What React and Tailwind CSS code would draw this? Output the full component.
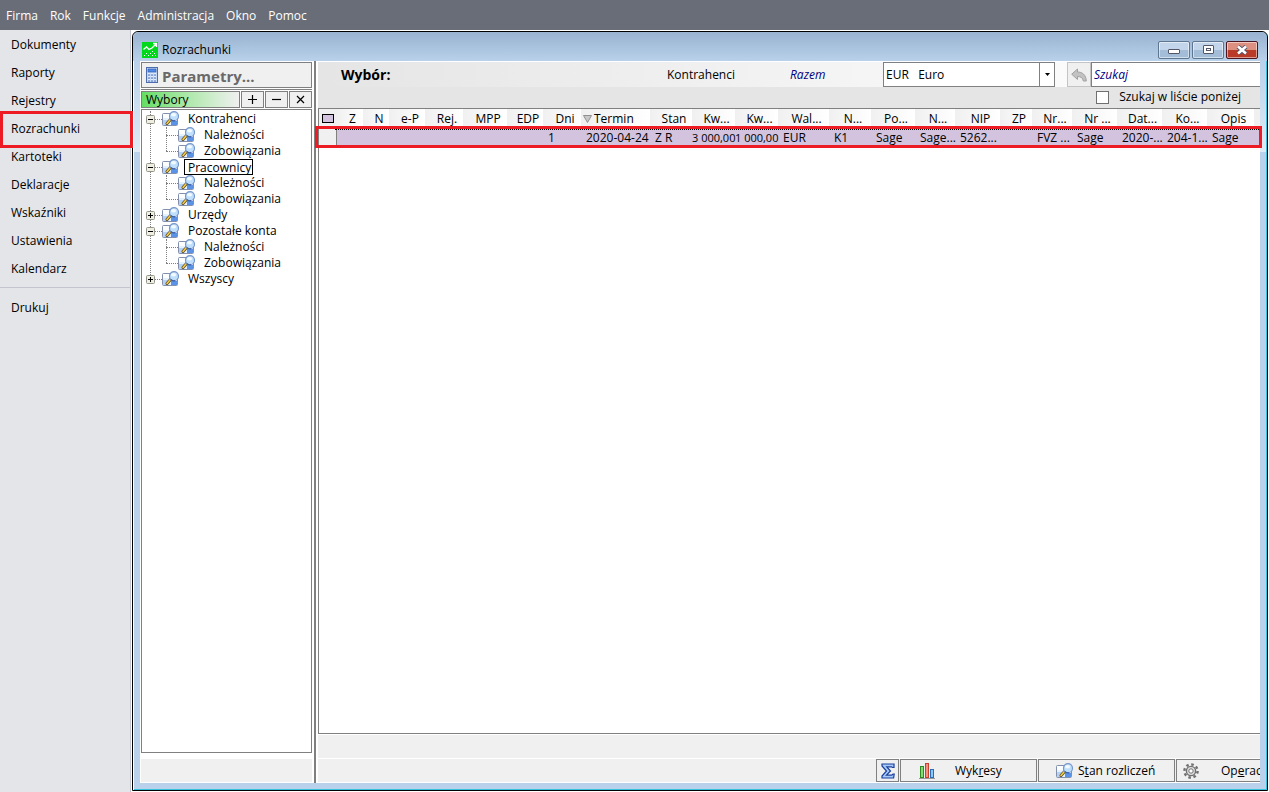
import React from "react";

const menu = ["Firma", "Rok", "Funkcje", "Administracja", "Okno", "Pomoc"];
const nav = ["Dokumenty", "Raporty", "Rejestry", "Rozrachunki", "Kartoteki", "Deklaracje", "Wskaźniki", "Ustawienia", "Kalendarz"];

const tree = [
  { label: "Kontrahenci", open: true, children: ["Należności", "Zobowiązania"] },
  { label: "Pracownicy", open: true, focused: true, children: ["Należności", "Zobowiązania"] },
  { label: "Urzędy", open: false, children: [] },
  { label: "Pozostałe konta", open: true, children: ["Należności", "Zobowiązania"] },
  { label: "Wszyscy", open: false, children: [] },
];

const columns = [
  { h: "Z", w: "w-[27px]", v: "" },
  { h: "N", w: "w-[26px]", v: "" },
  { h: "e-P", w: "w-[36px]", v: "" },
  { h: "Rej.", w: "w-[38px]", v: "" },
  { h: "MPP", w: "w-[44px]", v: "" },
  { h: "EDP", w: "w-[36px]", v: "" },
  { h: "Dni", w: "w-[38px]", v: "1" },
  { h: "Termin", w: "w-[69px]", v: "2020-04-24", sorted: true },
  { h: "Stan", w: "w-[42px]", v: "Z R" },
  { h: "Kw...", w: "w-[43px]", v: "3 000,00", amount: true },
  { h: "Kw...", w: "w-[43px]", v: "1 000,00", amount: true },
  { h: "Wal...", w: "w-[51px]", v: "EUR" },
  { h: "N...", w: "w-[42px]", v: "K1" },
  { h: "Po...", w: "w-[44px]", v: "Sage" },
  { h: "N...", w: "w-[40px]", v: "Sage..." },
  { h: "NIP", w: "w-[45px]", v: "5262..." },
  { h: "ZP", w: "w-[32px]", v: "" },
  { h: "Nr...", w: "w-[40px]", v: "FVZ ..." },
  { h: "Nr ...", w: "w-[45px]", v: "Sage" },
  { h: "Dat...", w: "w-[45px]", v: "2020-..." },
  { h: "Ko...", w: "w-[45px]", v: "204-1..." },
  { h: "Opis", w: "w-[47px]", v: "Sage" },
];

function LensIcon({ className = "" }) {
  return (
    <svg viewBox="0 0 18 16" className={"h-4 w-[18px] shrink-0 " + className} aria-hidden="true">
      <rect x="0.5" y="2.5" width="15" height="12" rx="1" fill="#e6f1fd" stroke="#8290ac" />
      <path d="M1 9h5v5H1z" fill="#b5d2f6" />
      <path d="M9 10h6v4H9z" fill="#5a93e6" />
      <path d="M1 3h6v4H1z" fill="#fbfdff" />
      <path d="M8.800 8.200 5 12.600" stroke="#5b4a28" strokeWidth="3" strokeLinecap="round" />
      <path d="M8.600 8.200 5 12.400" stroke="#f5cd3c" strokeWidth="1.600" strokeLinecap="round" />
      <circle cx="12" cy="5.200" r="4.500" fill="#bfe0fb" stroke="#7796cc" strokeWidth="1.200" />
      <path d="M8.600 8.500A4.500 4.500 0 0 0 13 9.600" stroke="#3d5fa8" strokeWidth="1.200" fill="none" />
      <ellipse cx="11.500" cy="3.800" rx="2.600" ry="1.800" fill="#f3faff" />
    </svg>
  );
}

function ChartLogo() {
  return (
    <svg viewBox="0 0 16 16" className="size-4" aria-hidden="true">
      <rect width="16" height="16" fill="#00d81c" />
      <path d="M1.500 7.500 4.500 5 7 7.500 10 6 14 2M11 1.500H14.500V5" fill="none" stroke="#fff" strokeWidth="1.300" />
      <path d="M2 13.500h1M4 11.500h1M6 13.500h1M8 11.500h1M10 13.500h1M10 9.500h1M12 11.500h1M13 13.500h1" stroke="#fff" />
    </svg>
  );
}

function CalcIcon() {
  return (
    <svg viewBox="0 0 12 16" className="h-4 w-3 shrink-0" aria-hidden="true">
      <rect x="0.5" y="0.5" width="11" height="15" fill="#c5d8f6" stroke="#4c6cab" />
      <rect x="2" y="2" width="8" height="3" fill="#4f8be6" stroke="#2a52a8" strokeWidth="0.6" />
      <path d="M2 7.500h8M2 10.500h8M2 13.500h8" stroke="#fff" strokeWidth="2" strokeDasharray="2 1" />
      <path d="M2 8h8M2 11h8M2 14h8" stroke="#2f5cb4" strokeDasharray="2 1" />
    </svg>
  );
}

function BarsIcon() {
  return (
    <svg viewBox="0 0 16 16" className="size-4 shrink-0" aria-hidden="true">
      <rect x="1.5" y="3.5" width="3" height="11" fill="#86dc74" stroke="#2f8a24" />
      <rect x="6.5" y="0.5" width="3" height="14" fill="#f58f7e" stroke="#c8402e" />
      <rect x="11.5" y="6.5" width="3" height="8" fill="#8cc8f8" stroke="#2a6cb8" />
      <path d="M0 15.500h16" stroke="#999" />
    </svg>
  );
}

function SigmaIcon() {
  return (
    <svg viewBox="0 0 14 16" className="h-4 w-3.5 shrink-0" aria-hidden="true">
      <path d="M1 1H13V4.500H11.500L10.500 3.800H5.800L9.500 8 5.500 12.200H10.800L12 11H13.200L12.600 15H1V13L5.500 8 1 3Z" fill="#a4cbf8" stroke="#1c3c9c" strokeWidth="1.200" />
    </svg>
  );
}

function GearIcon() {
  return (
    <svg viewBox="0 0 16 16" className="size-4 shrink-0" aria-hidden="true">
      <circle cx="8" cy="8" r="6.600" fill="none" stroke="#707070" strokeWidth="2.400" strokeDasharray="2.600 2.584" />
      <circle cx="8" cy="8" r="4.600" fill="#dedede" stroke="#707070" strokeWidth="1.400" />
      <circle cx="8" cy="8" r="2.200" fill="#fff" stroke="#707070" />
    </svg>
  );
}

function BackIcon() {
  return (
    <svg viewBox="0 0 16 14" className="h-3.5 w-4 shrink-0" aria-hidden="true">
      <path d="M6.500 1v3C11 4 15 6.500 15.300 13h-3C12 10 10 8.500 6.500 8.500V11.500L0.700 6.200Z" fill="#c2c2c2" stroke="#a0a0a0" />
    </svg>
  );
}

function Expander({ open }) {
  return (
    <button aria-label={open ? "Zwiń" : "Rozwiń"} className="relative z-10 flex size-[9px] shrink-0">
      <svg viewBox="0 0 9 9" className="size-[9px]" aria-hidden="true">
        <rect x="0.5" y="0.5" width="8" height="8" rx="1" fill="#efeee2" stroke="#95958a" />
        <path d={open ? "M2 4.500h5" : "M2 4.500h5M4.500 2v5"} stroke="#000" />
      </svg>
    </button>
  );
}

function Tree() {
  return (
    <ul className="relative">
      <li aria-hidden="true" className="absolute top-0 left-2 h-[168px] border-l border-dotted border-[#808080]" />
      {tree.map((n) => (
        <li key={n.label}>
          <div className="flex h-4 items-center pl-1">
            <Expander open={n.open} />
            <span className="w-[7px] border-t border-dotted border-[#808080]" />
            <LensIcon />
            <span className={n.focused ? "relative z-10 ml-1 h-4 border border-black pr-px pl-[3px] leading-4" : "ml-2 leading-4"}>{n.label}</span>
          </div>
          {n.children.length > 0 && (
            <ul className="relative">
              <li aria-hidden="true" className="absolute top-0 left-6 h-6 border-l border-dotted border-[#808080]" />
              {n.children.map((c) => (
                <li key={c} className="flex h-4 items-center pl-6">
                  <span className="w-3 border-t border-dotted border-[#808080]" />
                  <LensIcon />
                  <span className="ml-2 leading-4">{c}</span>
                </li>
              ))}
            </ul>
          )}
        </li>
      ))}
    </ul>
  );
}

const caption = "flex h-[18px] w-8 items-center justify-center rounded-[2px] border shadow-[inset_0_0_0_1px_rgba(255,255,255,0.5)]";
const captionBlue = " border-[#5f7690] bg-linear-to-b from-[#c3d5ea] from-50% to-[#a3bcd8] to-50%";
const toolButton = "flex shrink-0 items-center border border-[#808080] bg-[#f0f0f0]";

export default function App() {
  return (
    <div className="flex h-screen flex-col overflow-hidden bg-white font-['Open_Sans','Noto_Sans',sans-serif] text-[12px] leading-4 text-black">
      <nav className="flex h-[30px] shrink-0 items-center gap-3 bg-[#696d77] px-1.5 pt-0.5 text-white">
        {menu.map((m) => (
          <button key={m}>{m}</button>
        ))}
      </nav>
      <div className="flex min-h-0 flex-1">
        <aside className="w-[131px] shrink-0 border-r border-[#c3c4cd] bg-[#e4e5e9] pt-px">
          {nav.map((n) => (
            <a key={n} href="#" className="relative flex h-7 items-center pl-[11px]">
              {n}
              {n === "Rozrachunki" && <span className="absolute -top-1 -right-[3px] -bottom-[5px] left-0 z-20 border-3 border-[#ed1c24]" />}
            </a>
          ))}
          <hr className="mt-1 mb-1.5 border-[#c3c4cd]" />
          <a href="#" className="flex h-7 items-center pl-[11px]">Drukuj</a>
        </aside>

        <main className="m-px flex min-w-0 flex-1 flex-col rounded-t-md border border-black bg-[linear-gradient(to_bottom,#b9d1ea_30px,#e0ebf6_120px,#b9d1ea_120px)] shadow-[inset_1px_0_0_#fff,inset_-1px_-1px_0_#35c3e0]">
          <header className="flex h-[29px] shrink-0 items-center justify-between rounded-t-md bg-linear-to-b from-[#98b2d0] to-[#b9d1ea] pt-1.5 pr-[9px] pl-[9px]">
            <div className="flex items-center gap-1">
              <ChartLogo />
              <h1>Rozrachunki</h1>
            </div>
            <div className="flex gap-0.5">
              <button aria-label="Minimalizuj" className={caption + captionBlue}>
                <span className="mt-1 h-[5px] w-3 rounded-[1px] border border-[#535666] bg-white" />
              </button>
              <button aria-label="Maksymalizuj" className={caption + captionBlue}>
                <span className="flex h-[9px] w-[11px] items-center justify-center rounded-[1px] border border-[#535666] bg-white">
                  <span className="h-[3px] w-[5px] border border-[#535666]" />
                </span>
              </button>
              <button aria-label="Zamknij" className={caption + " border-[#4a1420] bg-linear-to-b from-[#dd9080] from-50% to-[#b93a26] to-50%"}>
                <svg viewBox="0 0 12 10" className="h-2.5 w-3" aria-hidden="true">
                  <path d="M2 1.500 10 8.500M10 1.500 2 8.500" stroke="#535666" strokeWidth="4.400" />
                  <path d="M2 1.500 10 8.500M10 1.500 2 8.500" stroke="#fff" strokeWidth="2.600" />
                </svg>
              </button>
            </div>
          </header>

          <div className="mx-[7px] mb-[7px] flex min-h-0 flex-1 bg-white pt-px">
            <section className="flex w-[174px] shrink-0 flex-col pr-0.5 pl-px">
              <button className="flex h-[26px] shrink-0 items-center gap-1 border border-[#808080] bg-[#f0f0f0] pl-1 text-[15px] font-bold text-[#696969]">
                <CalcIcon />
                <span className="pt-0.5">Parametry...</span>
              </button>
              <div className="mt-px flex h-[19px] shrink-0 gap-px border-t border-[#808080] pt-px">
                <h2 className="flex-1 border border-[#808080] bg-linear-to-r from-[#63de63] to-[#f0f0f0] pl-1 leading-[15px]">Wybory</h2>
                {[["Dodaj", "M1 5.500h9M5.500 1v9"], ["Usuń", "M1 5.500h9"], ["Wyczyść", "M2 2l7 7M9 2l-7 7"]].map(([label, d]) => (
                  <button key={label} aria-label={label} className={toolButton + " w-[23px] justify-center"}>
                    <svg viewBox="0 0 11 11" className="size-[11px]" aria-hidden="true">
                      <path d={d} stroke="#000" strokeWidth="1.200" />
                    </svg>
                  </button>
                ))}
              </div>
              <div className="mt-px min-h-0 flex-1 overflow-hidden border border-[#808080] pt-px">
                <Tree />
              </div>
              <div className="mt-1.5 mb-px h-[23px] shrink-0 bg-[#f0f0f0]" />
            </section>
            <div className="-mt-px w-0.5 shrink-0 bg-[#808080]" />

            <section className="ml-0.5 flex min-w-0 flex-1 flex-col">
              <div className="h-[46px] shrink-0 bg-[#e5e5e5]">
                <div className="flex h-[25px] bg-linear-to-r from-[#e5e5e5] to-white to-95%">
                  <h2 className="w-[349px] shrink-0 pt-[5px] pl-[23px] text-[14px] font-bold">Wybór:</h2>
                  <span className="w-[123px] shrink-0 pt-[5px]">Kontrahenci</span>
                  <em className="flex-1 pt-[5px] text-[#000080]">Razem</em>
                  <div className="relative w-[172px] shrink-0">
                    <select aria-label="Waluta" className="size-full appearance-none border border-[#808080] bg-white pl-0.5 outline-none">
                      <option>{"EUR\u00a0\u00a0\u00a0Euro"}</option>
                    </select>
                    <span className="pointer-events-none absolute inset-y-0 right-0 flex w-4 items-center justify-center border border-[#808080]">
                      <svg viewBox="0 0 5 3" className="h-[3px] w-[5px]" aria-hidden="true"><path d="M0 0h5L2.500 3z" /></svg>
                    </span>
                  </div>
                  <button aria-label="Cofnij" className="ml-3 flex w-6 shrink-0 items-center justify-center border border-[#c4c4c4] bg-[#f0f0f0]">
                    <BackIcon />
                  </button>
                  <input aria-label="Szukaj" placeholder="Szukaj" className="w-[169px] shrink-0 border border-r-0 border-[#808080] bg-white pl-0.5 italic outline-none placeholder:text-[#000080]" />
                </div>
                <label className="flex items-center justify-end gap-2.5 pt-0.5 pr-[19px]">
                  <input type="checkbox" className="size-[13px] appearance-none border border-[#707070] bg-white" />
                  Szukaj w liście poniżej
                </label>
              </div>

              <div className="relative min-h-0 flex-1 border-t border-b border-l border-[#808080]">
                <table className="w-full table-fixed border-collapse">
                  <thead>
                    <tr className="h-[18px]">
                      <th className="w-[17px] bg-[#f0f0f0] p-0 pt-px">
                        <span className="mx-auto block h-[9px] w-3 border border-black bg-[#d3c3de]" />
                      </th>
                      {columns.map((c, i) => (
                        <th key={i} className={c.w + " bg-linear-to-r from-[#f0f0f0] to-white p-0 pt-0.5 pl-1.5 font-normal whitespace-nowrap"}>
                          {c.sorted ? (
                            <span className="-ml-1 flex items-center gap-0.5">
                              <svg viewBox="0 0 9 8" className="h-2 w-[9px]" aria-hidden="true">
                                <path d="M0.500 0.500h8L4.500 7.500z" fill="#c8c8c8" stroke="#909090" />
                              </svg>
                              {c.h}
                            </span>
                          ) : c.h}
                        </th>
                      ))}
                      <th className="bg-[#f0f0f0] p-0" aria-label="Koniec" />
                    </tr>
                  </thead>
                  <tbody>
                    <tr className="h-5 bg-[#d3c3de]">
                      <td className="border-r border-[#808080] bg-[#f0f0f0] p-0" />
                      {columns.map((c, i) => (
                        <td key={i} className={"p-0 pt-0.5 whitespace-nowrap " + (c.amount ? "text-right text-[11px]" : "pl-[5px]")}>{c.v}</td>
                      ))}
                      <td className="p-0" />
                    </tr>
                  </tbody>
                </table>
                <div className="absolute top-[17px] -right-0.5 -left-1 h-[22px] border-3 border-[#ed1c24]">
                  <div className="ml-[17px] border-t border-dotted border-black" />
                </div>
              </div>

              <div className="mt-px h-[23px] shrink-0 bg-[#f0f0f0]" />
              <footer className="mt-px mb-px flex h-[23px] shrink-0 justify-end gap-px overflow-hidden bg-[#f0f0f0]">
                <button aria-label="Suma" className={toolButton + " w-[23px] justify-center"}><SigmaIcon /></button>
                <button className={toolButton + " w-[137px] pl-[18px]"}>
                  <BarsIcon />
                  <span className="ml-5">Wyk<u>r</u>esy</span>
                </button>
                <button className={toolButton + " w-[137px] pl-[17px]"}>
                  <LensIcon />
                  <span className="ml-1">S<u>t</u>an rozliczeń</span>
                </button>
                <button className={toolButton + " w-[84px] overflow-hidden border-r-0 pl-1.5"}>
                  <GearIcon />
                  <span className="ml-[22px]">Op<u>e</u>racje</span>
                </button>
              </footer>
            </section>
          </div>
        </main>
      </div>
    </div>
  );
}
